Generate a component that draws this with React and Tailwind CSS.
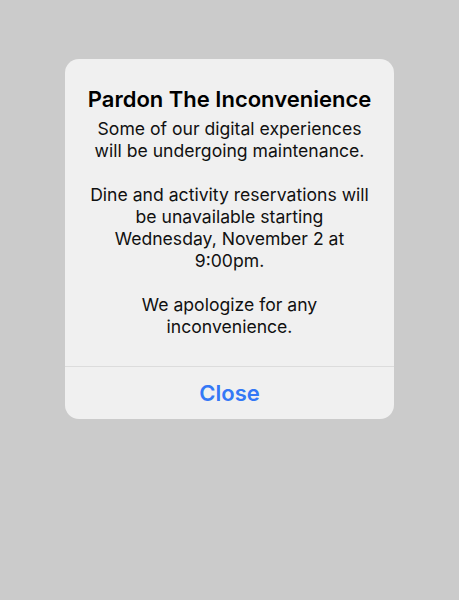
export default function App() {
  return (
    <div className="min-h-[600px] w-full bg-[#cbcbcb] pt-[59px]" style={{ fontFamily: 'Inter, "Noto Sans", sans-serif' }}>
      <div className="mx-auto w-[329px] overflow-hidden rounded-[14px] bg-[#f0f0f0]">
        <div className="px-3 pt-[27px] pb-[28px] text-center">
          <h2 className="text-[22px] font-semibold leading-[26px] text-black">
            Pardon The Inconvenience
          </h2>
          <div className="mt-[6px] text-[17.6px] leading-[22px] text-[#111]">
            <p>
              Some of our digital experiences
              <br />
              will be undergoing maintenance.
            </p>
            <p className="mt-[22px]">
              Dine and activity reservations will
              <br />
              be unavailable starting
              <br />
              Wednesday, November 2 at
              <br />
              9:00pm.
            </p>
            <p className="mt-[22px]">
              We apologize for any
              <br />
              inconvenience.
            </p>
          </div>
        </div>
        <div className="border-t border-[#dcdcdc]">
          <button className="h-[52px] w-full text-[22px] font-semibold text-[#3478f6]">
            Close
          </button>
        </div>
      </div>
    </div>
  );
}
